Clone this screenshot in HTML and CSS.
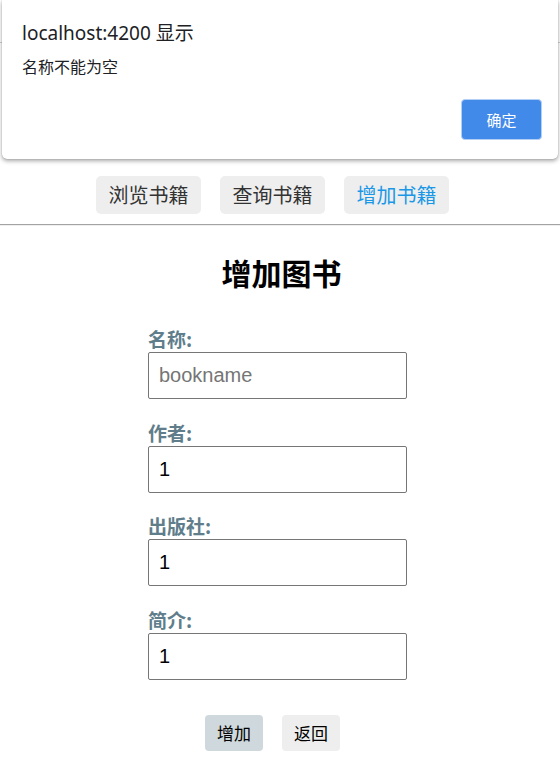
FILE: index.html
```html
<!DOCTYPE html>
<html lang="zh">
<head>
<meta charset="utf-8">
<title>增加图书</title>
<link rel="stylesheet" href="styles.css">
</head>
<body>
<div class="topbar"></div>
<nav class="nav">
  <button class="nav-btn" type="button">浏览书籍</button>
  <button class="nav-btn" type="button">查询书籍</button>
  <button class="nav-btn nav-btn-active" type="button">增加书籍</button>
</nav>
<div class="rule"></div>
<h2 class="title">增加图书</h2>
<form class="form">
  <div class="field">
    <label class="label" for="f-name">名称:</label>
    <input class="input" id="f-name" type="text" placeholder="bookname">
  </div>
  <div class="field">
    <label class="label" for="f-author">作者:</label>
    <input class="input" id="f-author" type="text" value="1">
  </div>
  <div class="field">
    <label class="label" for="f-pub">出版社:</label>
    <input class="input" id="f-pub" type="text" value="1">
  </div>
  <div class="field">
    <label class="label" for="f-intro">简介:</label>
    <input class="input" id="f-intro" type="text" value="1">
  </div>
  <div class="actions">
    <button class="act-btn act-primary" type="button">增加</button>
    <button class="act-btn" type="button">返回</button>
  </div>
</form>

<div class="dialog" role="alertdialog">
  <div class="dialog-title">localhost:4200 显示</div>
  <div class="dialog-msg">名称不能为空</div>
  <div class="dialog-actions">
    <button class="dialog-btn" type="button">确定</button>
  </div>
</div>
</body>
</html>
```
FILE: styles.css
```css
html, body {
  margin: 0;
  padding: 0;
  background: #fff;
}
body {
  font-family: "Noto Sans CJK SC", "Noto Sans", sans-serif;
  color: #000;
  width: 560px;
}
.topbar {
  height: 42px;
  border-bottom: 1px solid #cfcfcf;
}
.nav {
  display: flex;
  justify-content: center;
  gap: 19px;
  padding-right: 15px;
  margin-top: 133px;
}
.nav-btn {
  height: 38px;
  width: 105px;
  padding: 0;
  border: none;
  border-radius: 5px;
  background: #eeeeee;
  color: #333333;
  font-family: "Noto Sans CJK SC", sans-serif;
  font-size: 20px;
  line-height: 38px;
}
.nav-btn-active {
  color: #1a98e6;
}
.rule {
  margin-top: 10px;
  border-top: 1px solid #a3a3a3;
  border-bottom: 1px solid #eeeeee;
}
.title {
  margin: 26px 0 0;
  text-align: center;
  font-size: 30px;
  line-height: 40px;
  font-weight: 700;
  padding-left: 3px;
}
.form {
  margin-top: 33px;
}
.field {
  margin-left: 148px;
  width: 259px;
  margin-bottom: 19.67px;
}
.label {
  display: block;
  font-size: 19px;
  line-height: 27px;
  font-weight: 700;
  color: #607d8b;
}
.input {
  display: block;
  box-sizing: border-box;
  width: 259px;
  height: 47px;
  margin: 0;
  padding: 0 10px;
  border: 1px solid #767676;
  border-radius: 2px;
  font-family: "Liberation Sans", Arial, sans-serif;
  font-size: 20px;
  color: #000;
  outline: none;
}
.input::placeholder {
  color: #757575;
}
.actions {
  display: flex;
  justify-content: center;
  gap: 19px;
  padding-right: 15px;
  margin-top: 35px;
}
.act-btn {
  height: 36px;
  width: 58px;
  padding: 0;
  border: none;
  border-radius: 4px;
  background: #eeeeee;
  color: #000;
  font-family: "Noto Sans CJK SC", sans-serif;
  font-size: 17px;
  line-height: 36px;
}
.act-primary {
  background: #cfd8dc;
}
.dialog {
  position: absolute;
  top: 0;
  left: 2px;
  width: 556px;
  box-sizing: border-box;
  height: 159px;
  padding: 21px 16px 0 20px;
  background: #fff;
  border-radius: 0 0 5px 5px;
  box-shadow: 0 2px 4px rgba(0, 0, 0, 0.35), 0 0 1px rgba(0, 0, 0, 0.35);
  font-family: "Noto Sans", "Noto Sans CJK SC", sans-serif;
}
.dialog-title {
  font-size: 19px;
  line-height: 24px;
  color: #202124;
}
.dialog-msg {
  margin-top: 12px;
  font-size: 16px;
  line-height: 20px;
  color: #202124;
}
.dialog-actions {
  margin-top: 22px;
  display: flex;
  justify-content: flex-end;
}
.dialog-btn {
  width: 81px;
  height: 41px;
  padding: 0;
  border: 1px solid #b3cff5;
  border-radius: 4px;
  background: #428aea;
  color: #fff;
  font-family: "Noto Sans CJK SC", sans-serif;
  font-size: 15px;
}
```
